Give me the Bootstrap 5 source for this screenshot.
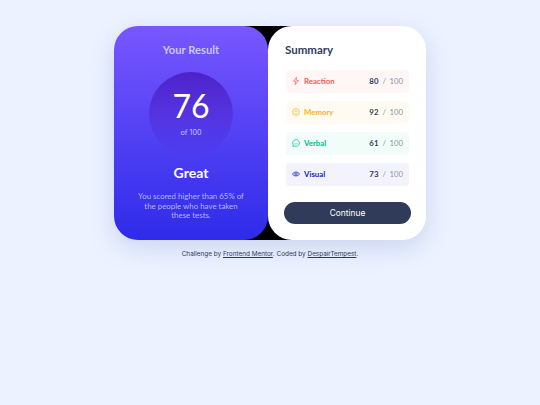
<!DOCTYPE html>
<html lang="en"><head><meta charset="utf-8"><title>Results summary</title>
<link href="https://cdn.jsdelivr.net/npm/bootstrap@5.3.0/dist/css/bootstrap.min.css" rel="stylesheet">
<style>
html,body{height:100%}
body{background:#ecf2ff;font-family:"Lato","Noto Sans",sans-serif;padding-top:26px;overflow:hidden}
.result-shell{width:312px;height:214px;background:linear-gradient(90deg,transparent 35%,#000 35%,#000 60%,transparent 60%);border-radius:24px;box-shadow:0 8px 24px rgba(120,140,200,.28)}
.result-left{width:154px;flex:none;border-radius:24px;background:linear-gradient(180deg,#7857ff,#2e2be9);padding-top:17px}
.result-right{width:158px;flex:none;border-radius:24px;background:#fff;padding:15px 17px 16px 18px}
.result-h{font-size:11.2px;font-weight:700;color:#c8c7ff;line-height:14px;margin:0}
.score-ring{width:84px;height:84px;margin-top:15px;background:linear-gradient(180deg,#4d21c9,rgba(37,33,201,0));padding-top:16px}
.score-num{font-size:32px;line-height:36px;color:#fff;font-weight:400}
.score-of{font-size:7.2px;line-height:10px;color:#c8c7ff;margin-top:4px;font-family:"Inter",sans-serif}
.verdict{font-size:14px;font-weight:700;color:#fff;line-height:17px;margin:8px 0 0}
.verdict-text{font-size:7.9px;line-height:9.7px;color:#b5b3ff;margin:11px 0 0;width:110px}
.sum-h{font-size:11.5px;font-weight:700;color:#303b5a;line-height:14px;margin:2px 0 13px -1px}
.stat-row{height:23px;border-radius:4px;padding:0 6px;font-size:7.8px;font-weight:700;margin-bottom:8px}
.stat-row svg{width:8px;height:8px;margin:0 4px 1px 0;flex:none}
.stat-red{background:#fff6f5;color:#ff5757}
.stat-yellow{background:#fffbf2;color:#ffb01f}
.stat-green{background:#f2fcf9;color:#00bb8f}
.stat-blue{background:#f3f3fd;color:#1125d4}
.stat-val{color:#303b5a;font-weight:700}
.stat-max{color:#8f93a5;font-weight:400;margin-left:4px;word-spacing:1.5px}
.go-btn{display:block;width:127px;height:22px;margin:16px 0 0 -2px;border-radius:11px;background:#303b5a;color:#fff;border:0;font:400 8.4px/22px "Inter",sans-serif;padding:0}
.credit{font-size:6.4px;color:#303b5a;line-height:9px;margin-top:10px;font-family:"Inter",sans-serif}
.credit a{color:#303b5a}
</style></head>
<body>
<main class="d-flex flex-column align-items-center">
<div class="result-shell d-flex">
<section class="result-left d-flex flex-column align-items-center text-center">
<h1 class="result-h">Your Result</h1>
<div class="score-ring rounded-circle d-flex flex-column align-items-center">
<div class="score-num">76</div><div class="score-of">of 100</div>
</div>
<h2 class="verdict">Great</h2>
<p class="verdict-text">You scored higher than 65% of the people who have taken these tests.</p>
</section>
<section class="result-right">
<h2 class="sum-h">Summary</h2>
<div class="stat-row stat-red d-flex align-items-center"><svg viewBox="0 0 20 20" fill="none" stroke="currentColor" stroke-width="1.8"><path d="M11 1 4 10h4l1 2-1 7 8-10h-4l-1-2z"/></svg><span>Reaction</span><span class="ms-auto stat-val">80</span><span class="stat-max">/ 100</span></div>
<div class="stat-row stat-yellow d-flex align-items-center"><svg viewBox="0 0 20 20" fill="none" stroke="currentColor" stroke-width="1.8"><circle cx="10" cy="10" r="8.5"/><path d="M8 6v4M12 6v4M7 14h6"/></svg><span>Memory</span><span class="ms-auto stat-val">92</span><span class="stat-max">/ 100</span></div>
<div class="stat-row stat-green d-flex align-items-center"><svg viewBox="0 0 20 20" fill="none" stroke="currentColor" stroke-width="1.8"><path d="M10 1.500a8.500 8.500 0 1 1-4.500 15.700L2 18.500l1.300-3.500A8.500 8.500 0 0 1 10 1.500z"/><path d="M6.500 11.500c2 1.500 5 1.500 7 0"/></svg><span>Verbal</span><span class="ms-auto stat-val">61</span><span class="stat-max">/ 100</span></div>
<div class="stat-row stat-blue d-flex align-items-center"><svg viewBox="0 0 20 20" fill="none" stroke="currentColor" stroke-width="1.8"><path d="M1 10c4-6.500 14-6.500 18 0-4 6.500-14 6.500-18 0z"/><circle cx="10" cy="10" r="3"/></svg><span>Visual</span><span class="ms-auto stat-val">73</span><span class="stat-max">/ 100</span></div>
<button type="button" class="btn go-btn">Continue</button>
</section>
</div>
<p class="credit">Challenge by <a href="#">Frontend Mentor</a>. Coded by <a href="#">DespairTempest</a>.</p>
</main>
<script src="https://cdn.jsdelivr.net/npm/bootstrap@5.3.0/dist/js/bootstrap.bundle.min.js"></script>
</body></html>
